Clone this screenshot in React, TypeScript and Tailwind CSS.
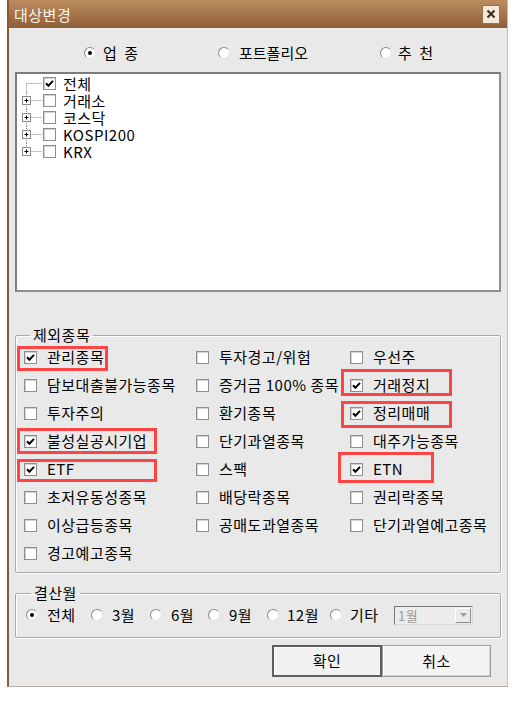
import React from 'react';

type Item = { label: string; checked?: boolean; box?: string };

// red highlight boxes are placed against each cell (cell starts at the checkbox)
const rows: (Item | null)[][] = [
  [
    { label: '관리종목', checked: true, box: 'left-[-7px] top-[3px] w-[91px] h-[25px]' },
    { label: '투자경고/위험' },
    { label: '우선주' },
  ],
  [
    { label: '담보대출불가능종목' },
    { label: '증거금 100% 종목' },
    { label: '거래정지', checked: true, box: 'left-[-9px] top-[-2px] w-[111px] h-[27px]' },
  ],
  [
    { label: '투자주의' },
    { label: '환기종목' },
    { label: '정리매매', checked: true, box: 'left-[-9px] top-[2px] w-[111px] h-[27px]' },
  ],
  [
    { label: '불성실공시기업', checked: true, box: 'left-[-7px] top-[1px] w-[140px] h-[26px]' },
    { label: '단기과열종목' },
    { label: '대주가능종목' },
  ],
  [
    { label: 'ETF', checked: true, box: 'left-[-7px] top-[4px] w-[140px] h-[23px]' },
    { label: '스팩' },
    { label: 'ETN', checked: true, box: 'left-[-12px] top-[-3px] w-[96px] h-[31px]' },
  ],
  [{ label: '초저유동성종목' }, { label: '배당락종목' }, { label: '권리락종목' }],
  [{ label: '이상급등종목' }, { label: '공매도과열종목' }, { label: '단기과열예고종목' }],
  [{ label: '경고예고종목' }, null, null],
];

const tree = [
  { label: '전체', checked: true, plus: false },
  { label: '거래소', plus: true },
  { label: '코스닥', plus: true },
  { label: 'KOSPI200', plus: true },
  { label: 'KRX', plus: true },
];

function Check({ checked }: { checked?: boolean }) {
  return (
    <span className="flex h-[13px] w-[13px] shrink-0 items-center justify-center border border-[#8e8e8e] bg-white shadow-[inset_1px_1px_0_#d2d2d2]">
      {checked && (
        <svg width="9" height="9" viewBox="0 0 9 9">
          <path d="M1 4.3 L3.4 6.7 L8 1.9" fill="none" stroke="#000" strokeWidth="2" />
        </svg>
      )}
    </span>
  );
}

function Radio({ on }: { on?: boolean }) {
  return (
    <span className="flex h-[12px] w-[12px] shrink-0 items-center justify-center rounded-full border border-t-[#8a8a8a] border-l-[#8a8a8a] border-b-[#e4e4e4] border-r-[#e4e4e4] bg-white">
      {on && <span className="h-[4px] w-[4px] rounded-full bg-black" />}
    </span>
  );
}

function Connector({ index, last, plus }: { index: number; last: boolean; plus?: boolean }) {
  const y1 = index === 0 ? 8.5 : 0;
  const y2 = last ? 8.5 : 17;
  return (
    <svg width="26" height="17" viewBox="0 0 26 17" className="shrink-0">
      <line x1="9.5" y1={y1} x2="9.5" y2={y2} stroke="#8a8a8a" strokeDasharray="1 1" />
      <line x1="9.5" y1="8.5" x2="25" y2="8.5" stroke="#8a8a8a" strokeDasharray="1 1" />
      {plus && (
        <>
          <rect x="5.5" y="4.5" width="8" height="8" fill="#fff" stroke="#8a8a8a" />
          <line x1="7.5" y1="8.5" x2="11.5" y2="8.5" stroke="#000" />
          <line x1="9.5" y1="6.5" x2="9.5" y2="10.5" stroke="#000" />
        </>
      )}
    </svg>
  );
}

export default function App() {
  return (
    <div className="h-[703px] w-[514px] bg-white pl-[7px] font-['Noto_Sans_CJK_KR','Noto_Sans',sans-serif] text-[15px] tracking-[0.5px] text-black">
      <div className="flex h-[687px] w-[501px] flex-col border-l-2 border-r border-b border-l-[#8a5a30] border-r-[#c6bdb3] border-b-[#b8aea4]">
        {/* title bar */}
        <div className="flex h-[28px] shrink-0 items-center justify-between bg-[linear-gradient(#bd8d60,#a8784f_45%,#8f5e36)] pl-[5px] pr-[7px]">
          <span className="text-[15px] leading-none text-[#fbf4ec]">대상변경</span>
          <span className="flex h-[19px] w-[18px] items-center justify-center border border-[#9a7250] bg-[#f6e9dc]">
            <svg width="10" height="10" viewBox="0 0 10 10">
              <path d="M1.5 1.5 L8.5 8.5 M8.5 1.5 L1.5 8.5" stroke="#3a2a1e" strokeWidth="2" />
            </svg>
          </span>
        </div>

        <div className="flex flex-1 flex-col bg-[#e9e9e9] px-[6px]">
          {/* market type */}
          <div className="flex h-[44px] items-center pt-[6px]">
            <div className="ml-[69px] flex w-[134px] items-center gap-[7px]">
              <Radio on />
              <span className="tracking-[2px]">업 종</span>
            </div>
            <div className="flex w-[162px] items-center gap-[9px]">
              <Radio />
              <span className="tracking-[0px]">포트폴리오</span>
            </div>
            <div className="flex items-center gap-[6px]">
              <Radio />
              <span className="tracking-[2px]">추 천</span>
            </div>
          </div>

          {/* tree */}
          <div className="h-[220px] border-2 border-t-[#7c7c7c] border-l-[#7c7c7c] border-b-[#8f8f8f] border-r-[#8f8f8f] bg-white pt-[1px]">
            {tree.map((t, i) => (
              <div key={t.label} className="flex h-[17px] items-center">
                <Connector index={i} last={i === tree.length - 1} plus={t.plus} />
                <Check checked={t.checked} />
                <span className="ml-[7px] leading-[17px]">{t.label}</span>
              </div>
            ))}
          </div>

          {/* exclusions */}
          <fieldset className="mt-[35px] rounded-[2px] border border-[#a9a9a9] pb-[5px] pl-[8px] shadow-[1px_1px_0_#fff,inset_1px_1px_0_#fff]">
            <legend className="ml-[6px] px-[3px] leading-[16px]">제외종목</legend>
            <div className="grid grid-cols-[172px_154px_1fr]">
              {rows.map((row, r) =>
                row.map((item, c) =>
                  item ? (
                    <div key={`${r}-${c}`} className="relative flex h-[28px] items-center gap-[10px]">
                      {item.box && (
                        <span className={`pointer-events-none absolute border-[3px] border-[#fd4545] ${item.box}`} />
                      )}
                      <Check checked={item.checked} />
                      <span className="whitespace-nowrap">{item.label}</span>
                    </div>
                  ) : (
                    <div key={`${r}-${c}`} className="h-[28px]" />
                  )
                )
              )}
            </div>
          </fieldset>

          {/* settlement month */}
          <fieldset className="mt-[12px] rounded-[2px] border border-[#a9a9a9] pb-[8px] pl-[10px] shadow-[1px_1px_0_#fff,inset_1px_1px_0_#fff]">
            <legend className="ml-[5px] px-[3px] leading-[16px]">결산월</legend>
            <div className="flex h-[28px] items-center">
              <div className="flex w-[65px] items-center gap-[9px]">
                <Radio on />
                <span>전체</span>
              </div>
              <div className="flex w-[59px] items-center gap-[9px]">
                <Radio />
                <span>3월</span>
              </div>
              <div className="flex w-[58px] items-center gap-[9px]">
                <Radio />
                <span>6월</span>
              </div>
              <div className="flex w-[59px] items-center gap-[9px]">
                <Radio />
                <span>9월</span>
              </div>
              <div className="flex w-[63px] items-center gap-[8px]">
                <Radio />
                <span>12월</span>
              </div>
              <div className="flex w-[64px] items-center gap-[8px]">
                <Radio />
                <span>기타</span>
              </div>
              <div className="flex h-[19px] w-[79px] items-center justify-between border border-t-[#7a7a7a] border-l-[#7a7a7a] border-b-[#dadada] border-r-[#dadada] bg-[#ececec] pl-[3px] pr-[1px]">
                <span className="text-[13px] leading-none text-[#9a9a9a]">1월</span>
                <span className="flex h-[15px] w-[16px] items-center justify-center border border-t-[#fff] border-l-[#fff] border-b-[#8c8c8c] border-r-[#8c8c8c] bg-[#ebebeb]">
                  <svg width="7" height="4" viewBox="0 0 7 4">
                    <path d="M0 0 H7 L3.5 4 Z" fill="#a0a0a0" />
                  </svg>
                </span>
              </div>
            </div>
          </fieldset>

          {/* buttons */}
          <div className="flex justify-end pr-[10px] pt-[7px]">
            <button className="h-[32px] w-[110px] border-2 border-[#5e5e5e] bg-[#f1f1f1] text-[15px] shadow-[inset_1px_1px_0_#fff]">
              확인
            </button>
            <button className="h-[32px] w-[109px] border border-[#9e9e9e] bg-[#f3f3f3] text-[15px] shadow-[inset_1px_1px_0_#fff,inset_-1px_-1px_0_#cfcfcf]">
              취소
            </button>
          </div>
        </div>
      </div>
    </div>
  );
}
